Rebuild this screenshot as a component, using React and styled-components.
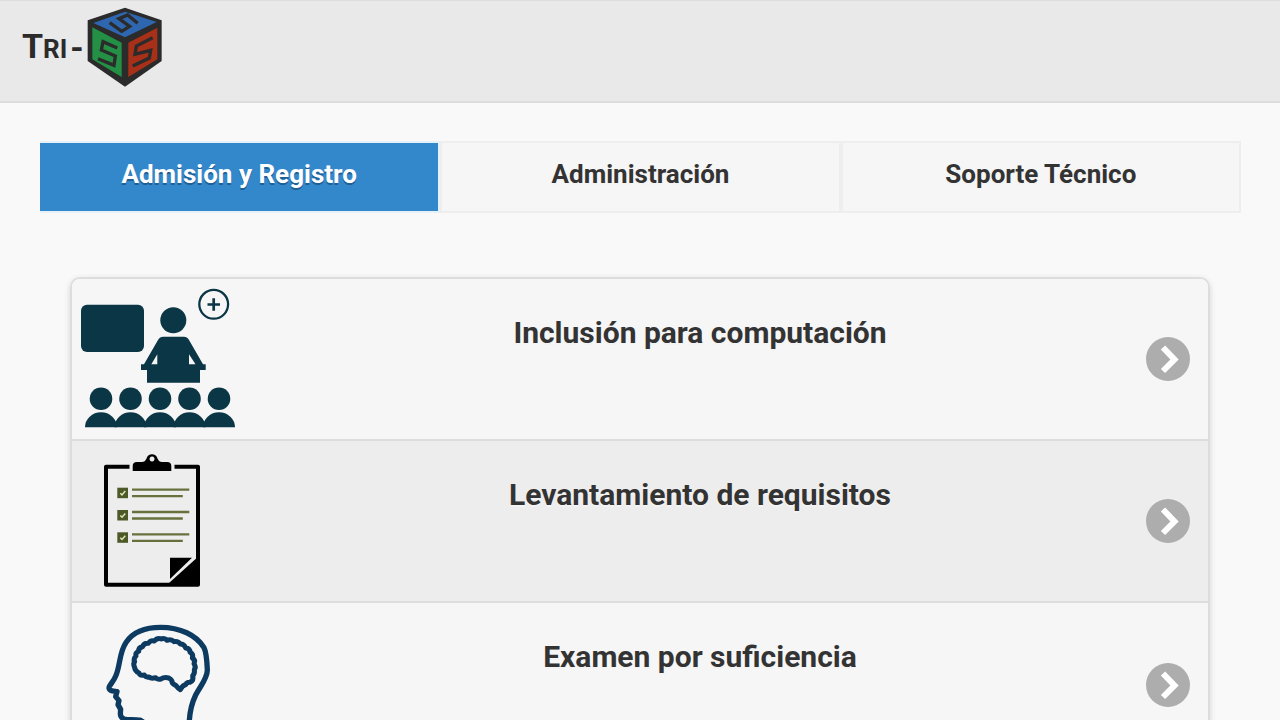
import React from "react";
import styled, { createGlobalStyle, css } from "styled-components";

const GlobalStyle = createGlobalStyle`
  *, *::before, *::after { box-sizing: border-box; }
  html { scrollbar-width: none; }
  body {
    margin: 0;
    background: #f9f9f9;
    color: #333;
    font-family: Roboto, "Liberation Sans", sans-serif;
  }
`;

const Header = styled.header`
  display: flex;
  align-items: flex-start;
  padding: 6px 22px 14px;
  background: #e9e9e9;
  border-top: 1px solid #ddd;
  border-bottom: 2px solid #ddd;
`;

const Brand = styled.a`
  display: flex;
  align-items: center;
  gap: 3px;
  color: #2b2b2b;
  font: bold 34px/40px Roboto, "Liberation Sans", sans-serif;
  text-decoration: none;
`;

const BrandSmall = styled.span`
  font-size: 26px;
`;

const Main = styled.main`
  padding: 38px 39px 40px 40px;
`;

const Tabs = styled.nav`
  display: grid;
  grid-template-columns: repeat(3, 1fr);
`;

const Tab = styled.button`
  height: 72px;
  padding: 0 16px 6px;
  border: 2px solid #eee;
  background: #f6f6f6;
  color: #333;
  font: bold 26px/32px Roboto, "Liberation Sans", sans-serif;
  text-shadow: 0 2px 0 #f3f3f3;
  cursor: pointer;

  ${(p) =>
    p.$active &&
    css`
      border-color: #e6f0f8;
      border-left: 0;
      background: #3388cc;
      color: #fff;
      text-shadow: 0 2px 0 #1f5f94;
    `}
`;

const List = styled.ul`
  margin: 64px 31px 0 30px;
  padding: 0;
  list-style: none;
  border: 2px solid #ddd;
  border-radius: 10px;
  box-shadow: 0 2px 6px rgba(0, 0, 0, 0.15);
  overflow: hidden;
`;

const Item = styled.li`
  & + & {
    border-top: 2px solid #ddd;
  }
`;

const ItemLink = styled.a`
  display: grid;
  grid-template-columns: 200px 1fr 62px;
  align-items: center;
  padding-right: 18px;
  background: ${(p) => (p.$shaded ? "#ededed" : "#f6f6f6")};
  color: #333;
  text-decoration: none;
`;

const Thumb = styled.svg`
  display: block;
  width: 168px;
  height: ${(p) => p.$height}px;
`;

const Title = styled.h2`
  align-self: start;
  margin: 34px 0 0;
  font-size: 30px;
  line-height: 40px;
  text-align: center;
  text-shadow: 0 2px 0 #f3f3f3;
`;

const Arrow = styled.svg`
  display: block;
  width: 44px;
  height: 44px;
  justify-self: end;
`;

function CubeLogo() {
  return (
    <svg width="76" height="80" viewBox="20 22 228 240" aria-hidden="true">
      <path d="M134 24 244 62V184L134 261 22 184V62Z" fill="#2b2b2b" />
      <path d="M134 36 229 67 134 113 39 70Z" fill="#2f66b0" />
      <path d="M36 83 124 129V232L36 179Z" fill="#239046" />
      <path d="M144 129 231 84V179L144 232Z" fill="#a83018" />
      <g fill="none" stroke="#2b2b2b" strokeWidth="10">
        <path d="M172 71 142 46 116 57 148 80 124 95 88 69" />
        <path d="M111 145 68 126 63 151 105 169 101 197 53 177" />
        <path d="M217 114 168 139 164 164 211 152 207 175 157 199" />
      </g>
    </svg>
  );
}

function ClassroomPicture() {
  const seats = [29, 58.5, 88, 117.5, 147];
  return (
    <Thumb $height={160} viewBox="0 0 168 160" fill="#0a3645" aria-hidden="true">
      <rect x="9" y="25.7" width="63" height="47.3" rx="6" />
      <circle cx="101.3" cy="41.3" r="13" />
      <g fill="none" stroke="#0a3645">
        <circle cx="141.7" cy="25.3" r="14.4" strokeWidth="2.3" />
        <path d="M135.5 25.5H148M141.7 19.2V31.7" strokeWidth="2.7" />
      </g>
      <path
        fillRule="evenodd"
        d="M91 57.7H112Q115 57.7 117 61L131 85.3H133.7V91H128V103.7H75V91H69V85.3H72L86 61Q88 57.7 91 57.7ZM85.3 75.3 79.3 85.3H85.3ZM117 75.3V85.3H123.5Z"
      />
      {seats.map((x) => (
        <g key={x}>
          <circle cx={x} cy="119.7" r="11.3" />
          <path d={`M${x - 16} 148.3A16 15 0 0 1 ${x + 16} 148.3Z`} />
        </g>
      ))}
    </Thumb>
  );
}

function ChecklistPicture() {
  return (
    <Thumb $height={160} viewBox="0 0 168 160" aria-hidden="true">
      <path
        d="M57.5 25.7H34V143.7H126V25.7H102.5"
        fill="none"
        stroke="#000"
        strokeWidth="4"
        strokeLinejoin="round"
      />
      <path
        fillRule="evenodd"
        d="M60.7 30V25Q60.7 21 65 21H70Q73 21 74.5 17.5Q76 13.3 80 13.3T85.5 17.5Q87 21 90 21H95Q99.3 21 99.3 25V30ZM80 15.5A2.5 2.5 0 1 0 80.1 15.5Z"
      />
      {[46.7, 69, 91.3].map((y) => (
        <g key={y} transform={`translate(45.3 ${y})`}>
          <rect width="10.7" height="10.5" fill="#4c5a27" />
          <path d="M3 5.5 4.7 7.2 8 3.4" fill="none" stroke="#dfe5b8" strokeWidth="1.5" />
          <path d="M14.7 2H72M14.7 8.5H65.5" stroke="#66713e" strokeWidth="2.3" />
        </g>
      ))}
      <path d="M98 116.7H120L98 138Z" />
      <path d="M125 116.7V144H97V142Z" />
    </Thumb>
  );
}

function HeadPicture() {
  return (
    <Thumb $height={164} viewBox="36 24 504 492" aria-hidden="true">
      <g fill="none" stroke="#0d3a61" strokeLinejoin="round" strokeLinecap="round">
        <path
          strokeWidth="16"
          d="M242 376C222 372 206 376 192 372C178 366 181 354 182 343L174 329 177 317 167 305 171 290C158 288 148 288 147 279C146 272 161 260 168 241C182 207 177 172 199 141C220 110 257 97 302 97C360 97 409 120 432 158C440 174 441 200 442 225C442 251 421 273 407 300C396 323 390 345 388 376C386 405 398 430 412 452M242 376Q270 390 268 420V452H412"
        />
        <path
          strokeWidth="15"
          d="M223 215Q219 206 224 200Q219 191 228 183Q225 174 236 169Q235 157 248 155Q251 144 265 145Q271 135 283 138Q292 127 304 132Q314 128 321 136Q334 131 342 140Q354 137 361 147Q373 147 377 159Q390 160 390 172Q401 177 397 189Q407 195 402 206Q409 215 403 224Q405 236 398 242Q402 256 390 262Q381 261 377 269Q368 270 361 284Q353 279 347 271Q335 266 336 258Q329 247 321 248Q310 247 303 252Q292 255 287 248Q274 252 267 246Q258 248 253 240Q240 243 237 234Q225 229 223 215Z"
        />
      </g>
    </Thumb>
  );
}

function ArrowIcon() {
  return (
    <Arrow viewBox="0 0 44 44" aria-hidden="true">
      <circle cx="22" cy="22" r="22" fill="#adadad" />
      <path d="M17 10.5 28.5 22.5 17 34" fill="none" stroke="#fff" strokeWidth="6" />
    </Arrow>
  );
}

const tabs = ["Admisión y Registro", "Administración", "Soporte Técnico"];

const items = [
  { title: "Inclusión para computación", Picture: ClassroomPicture },
  { title: "Levantamiento de requisitos", Picture: ChecklistPicture, shaded: true },
  { title: "Examen por suficiencia", Picture: HeadPicture },
];

export default function App() {
  const [active, setActive] = React.useState(0);
  return (
    <>
      <GlobalStyle />
      <Header>
        <Brand href="#">
          <span>
            T<BrandSmall>RI</BrandSmall>
          </span>
          <span>-</span>
          <CubeLogo />
        </Brand>
      </Header>
      <Main>
        <Tabs>
          {tabs.map((label, i) => (
            <Tab key={label} type="button" $active={i === active} onClick={() => setActive(i)}>
              {label}
            </Tab>
          ))}
        </Tabs>
        <List>
          {items.map(({ title, Picture, shaded }) => (
            <Item key={title}>
              <ItemLink href="#" $shaded={shaded}>
                <Picture />
                <Title>{title}</Title>
                <ArrowIcon />
              </ItemLink>
            </Item>
          ))}
        </List>
      </Main>
    </>
  );
}
